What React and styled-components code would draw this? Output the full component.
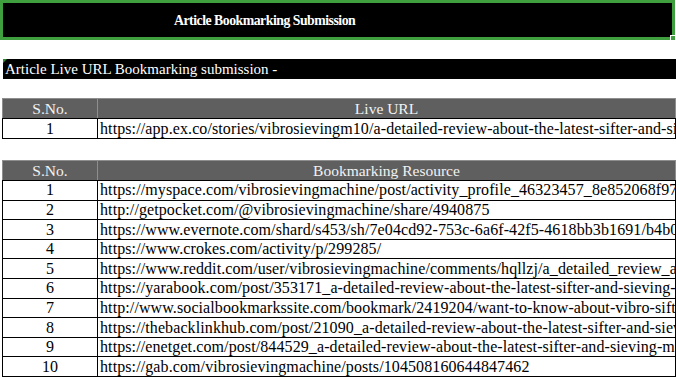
import React from 'react';
import styled, { createGlobalStyle } from 'styled-components';

const liveUrls = [
  'https://app.ex.co/stories/vibrosievingm10/a-detailed-review-about-the-latest-sifter-and-sieving-machine',
];

const resources = [
  'https://myspace.com/vibrosievingmachine/post/activity_profile_46323457_8e852068f9764c2b',
  'http://getpocket.com/@vibrosievingmachine/share/4940875',
  'https://www.evernote.com/shard/s453/sh/7e04cd92-753c-6a6f-42f5-4618bb3b1691/b4b0c2d1',
  'https://www.crokes.com/activity/p/299285/',
  'https://www.reddit.com/user/vibrosievingmachine/comments/hqllzj/a_detailed_review_about_the_latest',
  'https://yarabook.com/post/353171_a-detailed-review-about-the-latest-sifter-and-sieving-machine',
  'http://www.socialbookmarkssite.com/bookmark/2419204/want-to-know-about-vibro-sifter',
  'https://thebacklinkhub.com/post/21090_a-detailed-review-about-the-latest-sifter-and-sieving',
  'https://enetget.com/post/844529_a-detailed-review-about-the-latest-sifter-and-sieving-machine',
  'https://gab.com/vibrosievingmachine/posts/104508160644847462',
];

const App = () => {
  return (
    <>
      <GlobalStyle />
      <Sheet>
        <TitleBar>
          <TitleText>Article Bookmarking Submission</TitleText>
          <FillHandle />
        </TitleBar>

        <SectionBar>Article Live URL Bookmarking submission -</SectionBar>

        <Table>
          <colgroup>
            <col style={{ width: 95 }} />
            <col />
          </colgroup>
          <thead>
            <tr>
              <HeadCell>S.No.</HeadCell>
              <HeadCell>Live URL</HeadCell>
            </tr>
          </thead>
          <tbody>
            {liveUrls.map((url, i) => (
              <tr key={url}>
                <NumCell>{i + 1}</NumCell>
                <UrlCell>{url}</UrlCell>
              </tr>
            ))}
          </tbody>
        </Table>

        <Table $gap={21}>
          <colgroup>
            <col style={{ width: 95 }} />
            <col />
          </colgroup>
          <thead>
            <tr>
              <HeadCell>S.No.</HeadCell>
              <HeadCell>Bookmarking Resource</HeadCell>
            </tr>
          </thead>
          <tbody>
            {resources.map((url, i) => (
              <tr key={url}>
                <NumCell>{i + 1}</NumCell>
                <UrlCell>{url}</UrlCell>
              </tr>
            ))}
          </tbody>
        </Table>
      </Sheet>
    </>
  );
};

export default App;

const GlobalStyle = createGlobalStyle`
  html, body {
    margin: 0;
    padding: 0;
    background: #ffffff;
    overflow: hidden;
  }
  body {
    font-family: "Liberation Serif", "DejaVu Serif", serif;
    color: #000000;
  }
`;

const Sheet = styled.div`
  width: 676px;
  height: 377px;
  overflow: hidden;
  display: flex;
  flex-direction: column;
`;

const TitleBar = styled.div`
  position: relative;
  box-sizing: border-box;
  width: 675px;
  height: 41px;
  border: 3px solid #3f9f3f;
  background: #000000;
  display: flex;
  align-items: center;
  padding: 2px 0 0 171px;
`;

const TitleText = styled.span`
  color: #ffffff;
  font-weight: bold;
  font-size: 13.8px;
  letter-spacing: -0.5px;
`;

const FillHandle = styled.span`
  position: absolute;
  right: -4px;
  bottom: -4px;
  width: 4px;
  height: 4px;
  background: #3f9f3f;
  border: 1px solid #ffffff;
`;

const SectionBar = styled.div`
  position: relative;
  margin: 19px 0 0 3px;
  height: 20px;
  line-height: 20px;
  background: #000000;
  color: #ffffff;
  font-size: 15px;
  padding-left: 2px;
  white-space: nowrap;

  &::before {
    content: '';
    position: absolute;
    left: 0;
    top: 0;
    border-top: 4px solid #2e8b2e;
    border-right: 4px solid transparent;
  }
`;

const Table = styled.table`
  margin: ${(p) => p.$gap || 19}px 0 0 2px;
  width: 674px;
  border-collapse: collapse;
  table-layout: fixed;
  font-size: 15.5px;
`;

const HeadCell = styled.th`
  height: 19px;
  padding: 0;
  background: #5f5f5f;
  color: #f2f2f2;
  font-weight: normal;
  text-align: center;
  border-top: 1px solid #8e8e8e;
  border-left: 1px solid #8e8e8e;
  border-right: 1px solid #8e8e8e;
  border-bottom: 1px solid #000000;
  white-space: nowrap;
  line-height: 18px;
`;

const NumCell = styled.td`
  height: 18.6px;
  padding: 0;
  border: 1px solid #000000;
  text-align: center;
  line-height: 18px;
  font-size: 16px;
`;

const UrlCell = styled.td`
  height: 18.6px;
  padding: 0 0 0 2px;
  border: 1px solid #000000;
  white-space: nowrap;
  overflow: hidden;
  text-overflow: clip;
  line-height: 18px;
  font-size: 16px;
  letter-spacing: 0.1px;
`;
